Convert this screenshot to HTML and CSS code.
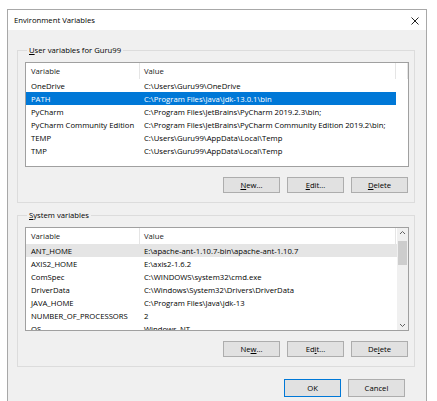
FILE: index.html
```html
<!DOCTYPE html>
<html>
<head>
  <meta charset="utf-8">
  <title>Environment Variables</title>
  <link rel="stylesheet" href="styles.css">
</head>
<body>
  <div class="window">
    <div class="titlebar">
      <span class="title">Environment Variables</span>
      <svg class="close" width="8" height="8" viewBox="0 0 8 8">
        <path d="M0.5 0.5 L7.5 7.5 M7.5 0.5 L0.5 7.5" stroke="#222" stroke-width="1" fill="none"/>
      </svg>
    </div>

    <div class="content">
      <fieldset class="group">
        <legend><u>U</u>ser variables for Guru99</legend>
        <div class="list">
          <div class="row head">
            <span class="cell">Variable</span>
            <span class="cell">Value</span>
            <span class="cell end"></span>
          </div>
          <div class="row"><span class="cell">OneDrive</span><span class="cell">C:\Users\Guru99\OneDrive</span></div>
          <div class="row selected"><span class="cell">PATH</span><span class="cell">C:\Program Files\Java\jdk-13.0.1\bin</span></div>
          <div class="row"><span class="cell">PyCharm</span><span class="cell">C:\Program Files\JetBrains\PyCharm 2019.2.3\bin;</span></div>
          <div class="row"><span class="cell">PyCharm Community Edition</span><span class="cell">C:\Program Files\JetBrains\PyCharm Community Edition 2019.2\bin;</span></div>
          <div class="row"><span class="cell">TEMP</span><span class="cell">C:\Users\Guru99\AppData\Local\Temp</span></div>
          <div class="row"><span class="cell">TMP</span><span class="cell">C:\Users\Guru99\AppData\Local\Temp</span></div>
        </div>
        <div class="buttons">
          <button class="btn"><u>N</u>ew...</button>
          <button class="btn"><u>E</u>dit...</button>
          <button class="btn"><u>D</u>elete</button>
        </div>
      </fieldset>

      <fieldset class="group second">
        <legend><u>S</u>ystem variables</legend>
        <div class="list scrolling">
          <div class="rows">
            <div class="row head">
              <span class="cell">Variable</span>
              <span class="cell">Value</span>
            </div>
            <div class="row hover"><span class="cell">ANT_HOME</span><span class="cell">E:\apache-ant-1.10.7-bin\apache-ant-1.10.7</span></div>
            <div class="row"><span class="cell">AXIS2_HOME</span><span class="cell">E:\axis2-1.6.2</span></div>
            <div class="row"><span class="cell">ComSpec</span><span class="cell">C:\WINDOWS\system32\cmd.exe</span></div>
            <div class="row"><span class="cell">DriverData</span><span class="cell">C:\Windows\System32\Drivers\DriverData</span></div>
            <div class="row"><span class="cell">JAVA_HOME</span><span class="cell">C:\Program Files\Java\jdk-13</span></div>
            <div class="row"><span class="cell">NUMBER_OF_PROCESSORS</span><span class="cell">2</span></div>
            <div class="row"><span class="cell">OS</span><span class="cell">Windows_NT</span></div>
          </div>
          <div class="scrollbar">
            <svg width="11" height="8" viewBox="0 0 11 8">
              <path d="M3 5 L5.5 2.5 L8 5" stroke="#606060" stroke-width="1" fill="none"/>
            </svg>
            <div class="track"><div class="thumb"></div></div>
            <svg width="11" height="8" viewBox="0 0 11 8">
              <path d="M3 3 L5.5 5.5 L8 3" stroke="#606060" stroke-width="1" fill="none"/>
            </svg>
          </div>
        </div>
        <div class="buttons">
          <button class="btn">Ne<u>w</u>...</button>
          <button class="btn">Ed<u>i</u>t...</button>
          <button class="btn">De<u>l</u>ete</button>
        </div>
      </fieldset>

      <div class="footer">
        <button class="btn default">OK</button>
        <button class="btn">Cancel</button>
      </div>
    </div>
  </div>
</body>
</html>
```

FILE: styles.css
```css
body{
  margin: 0;
  padding: 9px 0 0 7px;
  background-color: #fff;
  font-family: "Open Sans", "Noto Sans", sans-serif;
  font-size: 7.7px;
  color: #000;
}

.window{
  width: 420px;
  height: 400px;
  box-sizing: border-box;
  border: 1px solid #a8a8a8;
  background-color: #f0f0f0;
  overflow: hidden;
}

.titlebar{
  height: 20px;
  background-color: #fff;
  display: flex;
  align-items: center;
  justify-content: space-between;
  padding: 0 7px 0 6px;
}

.title{
  font-size: 7.7px;
}

.close{
  margin-top: 1px;
}

.content{
  padding: 14px 11px 0 9px;
}

.group{
  margin: 0;
  padding: 6px 5px 9px 7px;
  border: 1px solid #dcdcdc;
  min-inline-size: 0;
}

.group.second{
  margin-top: 6px;
}

.group legend{
  padding: 0 2px;
  margin-left: 2px;
  line-height: 12px;
}

.list{
  height: 105px;
  box-sizing: border-box;
  border: 1px solid #a0a0a0;
  background-color: #fff;
  overflow: hidden;
}

.list.scrolling{
  height: 104px;
  display: flex;
}

.rows{
  flex: 1;
}

.row{
  display: grid;
  grid-template-columns: 114px 256px 1fr;
  height: 13px;
  align-items: center;
  white-space: nowrap;
}

.row.head{
  height: 16px;
  color: #1a1a1a;
}

.row.head .cell{
  border-right: 1px solid #e5e5e5;
  height: 16px;
  line-height: 16px;
}

.cell{
  padding-left: 5px;
  overflow: hidden;
}

.cell + .cell{
  padding-left: 4px;
}

.row.selected{
  grid-template-columns: 114px 256px;
  width: 370px;
  background-color: #0078d7;
  color: #fff;
}

.row.hover{
  background-color: #e5e5e5;
}

.scrollbar{
  width: 11px;
  background-color: #f0f0f0;
  display: flex;
  flex-direction: column;
  align-items: center;
}

.scrollbar svg{
  margin: 1px 0;
}

.track{
  flex: 1;
  width: 100%;
}

.thumb{
  margin: 3px 1px 0;
  height: 24px;
  background-color: #cdcdcd;
}

.buttons{
  display: flex;
  justify-content: flex-end;
  gap: 7px;
  margin-top: 10px;
  padding-right: 1px;
}

.btn{
  width: 57px;
  height: 16px;
  padding: 0;
  font-family: inherit;
  font-size: 7.7px;
  color: #000;
  background-color: #e1e1e1;
  border: 1px solid #adadad;
}

.footer{
  display: flex;
  justify-content: flex-end;
  gap: 7px;
  margin-top: 12px;
  padding-right: 10px;
}

.footer .btn{
  height: 18px;
}

.btn.default{
  border-color: #0078d7;
}
```
